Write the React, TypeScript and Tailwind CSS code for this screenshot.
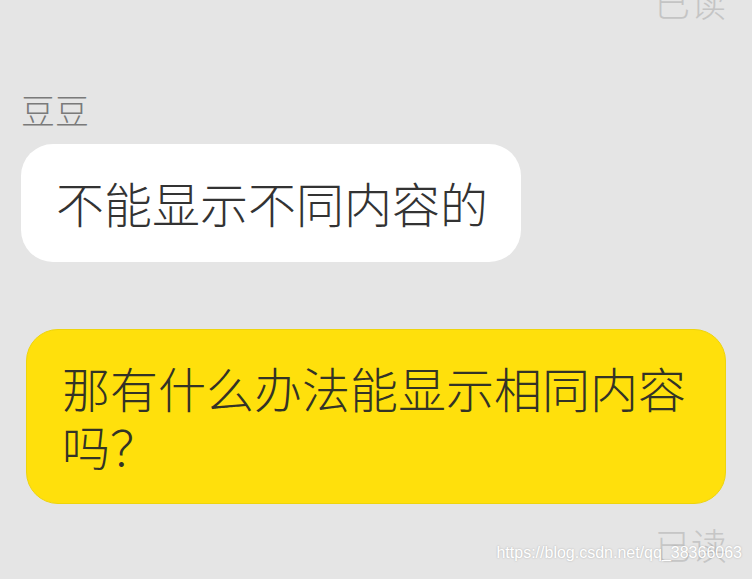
const cjk = { fontFamily: '"Noto Sans CJK SC", "Noto Sans", sans-serif' };

export default function App() {
  return (
    <div className="relative w-[752px] h-[579px] overflow-hidden bg-[#e5e5e5] font-light" style={cjk}>
      <div className="flex justify-end pr-[26px] mt-[-17px]">
        <span className="text-[36px] leading-none text-[#c4c4c4]">已读</span>
      </div>

      <div className="ml-[21px] mt-[74px] text-[34px] leading-none text-[#7a7a7a]">豆豆</div>

      <div className="ml-[21px] mt-[17px] w-[500px] rounded-[32px] bg-white pl-[35px] pt-[29px] pb-[31px] text-[48px] leading-[58px] text-[#333333]">
        不能显示不同内容的
      </div>

      <div className="ml-[26px] mt-[67px] w-[700px] rounded-[32px] border border-[#eed40c] bg-[#ffe00c] pl-[35px] pr-[20px] pt-[28px] pb-[29px] text-[48px] leading-[58px] text-[#333326]">
        那有什么办法能显示相同内容吗？
      </div>

      <div className="flex justify-end pr-[25px] mt-[22px]">
        <span className="text-[36px] leading-none text-[#c6c6c6]">已读</span>
      </div>

      <div
        className="absolute right-[10px] top-[543px] text-[16px] leading-[20px] font-normal text-white [text-shadow:0_0_2px_rgba(0,0,0,0.25)]"
        style={{ fontFamily: '"Liberation Sans", Arial, sans-serif' }}
      >
        https://blog.csdn.net/qq_38366063
      </div>
    </div>
  );
}
